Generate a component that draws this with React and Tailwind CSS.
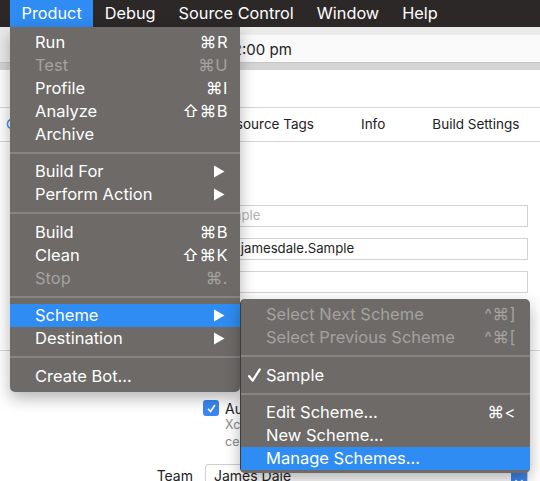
import React from 'react';

const mainItems = [
  { label: 'Run', key: '⌘R' },
  { label: 'Test', key: '⌘U', disabled: true },
  { label: 'Profile', key: '⌘I' },
  { label: 'Analyze', key: '⇧⌘B' },
  { label: 'Archive' },
  { sep: true },
  { label: 'Build For', arrow: true },
  { label: 'Perform Action', arrow: true },
  { sep: true },
  { label: 'Build', key: '⌘B' },
  { label: 'Clean', key: '⇧⌘K' },
  { label: 'Stop', key: '⌘.', disabled: true },
  { sep: true },
  { label: 'Scheme', arrow: true, active: true },
  { label: 'Destination', arrow: true },
  { sep: true },
  { label: 'Create Bot…' },
];

const subItems = [
  { label: 'Select Next Scheme', key: '^⌘]', disabled: true },
  { label: 'Select Previous Scheme', key: '^⌘[', disabled: true },
  { sep: true },
  { label: 'Sample', checked: true },
  { sep: true },
  { label: 'Edit Scheme…', key: '⌘<' },
  { label: 'New Scheme…' },
  { label: 'Manage Schemes…', active: true },
];

function Arrow() {
  return (
    <svg width="12" height="13" viewBox="0 0 12 13" className="ml-auto">
      <path d="M1 0.5 L11.5 6.5 L1 12.5 Z" fill="currentColor" />
    </svg>
  );
}

function Check() {
  return (
    <svg width="13" height="15" viewBox="0 0 13 15">
      <path d="M1.2 8.2 L4.6 12.6 L11.8 1.4" fill="none" stroke="white" strokeWidth="2.3" strokeLinecap="round" strokeLinejoin="round" />
    </svg>
  );
}

function Separator() {
  return (
    <div className="h-[14.5px] flex items-center">
      <div className="h-[2px] w-full bg-[#878482]" />
    </div>
  );
}

function MenuRow({ item, pl, pr, check }) {
  const color = item.disabled ? 'text-[#a5a29f]' : 'text-white';
  const bg = item.active ? 'bg-[#2f8cf2]' : '';
  return (
    <div className={`h-[23px] flex items-center ${pl} ${item.arrow ? 'pr-[15px]' : pr} ${color} ${bg}`}>
      {check && <span className="w-[18px] flex items-center">{item.checked && <Check />}</span>}
      <span>{item.label}</span>
      {item.arrow && <Arrow />}
      {item.key && (
        <span className="ml-auto tracking-[0.5px] font-['Inter','DejaVu_Sans',sans-serif]">{item.key}</span>
      )}
    </div>
  );
}

export default function App() {
  return (
    <div className="relative w-[540px] h-[481px] overflow-hidden bg-white font-['Inter','DejaVu_Sans',sans-serif]">
      {/* menu bar */}
      <div className="h-[27px] bg-[#2c2827] flex items-stretch pl-[10px] text-[16.3px] text-white">
        {['Product', 'Debug', 'Source Control', 'Window', 'Help'].map((m, i) => (
          <div key={m} className={`flex items-center px-[11.5px] ${i === 0 ? 'bg-[#2f8cf2]' : ''}`}>
            {m}
          </div>
        ))}
      </div>

      {/* toolbar */}
      <div className="h-[35px] bg-[#ebebeb] pt-[8px]">
        <div className="ml-[100px] h-[27px] bg-[#fafafa] flex items-center pt-[3px] text-[15px] text-[#222]">
          <span className="w-[142px] text-right">Today at 12</span>
          <span>:00 pm</span>
        </div>
      </div>
      <div className="h-[8px] bg-[#d5d5d5] border-t border-[#c6c6c6]" />

      <div className="h-[37px]" />

      {/* tabs */}
      <div className="h-[35px] border-y border-[#d6d6d6] flex items-center text-[13.5px] text-[#222]">
        <div className="w-[314px] flex justify-between pl-[6px]">
          <span className="text-[#2d7cf5]">General</span>
          <span>Capabilities</span>
          <span>Resource Tags</span>
        </div>
        <span className="ml-[47px]">Info</span>
        <span className="ml-[47px]">Build Settings</span>
      </div>

      <div className="h-[63px]" />

      {/* form fields */}
      <div className="ml-[205px] w-[323px] flex flex-col gap-[11px] text-[13.2px]">
        <div className="h-[22px] border border-[#d3d3d3] flex items-center pl-[8px] text-[#b5b5b5]">Sample</div>
        <div className="h-[22px] border border-[#d3d3d3] flex items-center pl-[4px] text-[#222]">com.jamesdale.Sample</div>
        <div className="h-[22px] border border-[#d3d3d3]" />
      </div>

      <div className="h-[58px] border-b border-[#d8d8d8]" />

      <div className="h-[49px]" />

      {/* signing */}
      <div className="ml-[203px] flex items-center gap-[6px] h-[16px]">
        <div className="w-[16px] h-[16px] rounded-[3px] bg-[#3b86f2] flex items-center justify-center">
          <svg width="11" height="11" viewBox="0 0 11 11">
            <path d="M2 5.8 L4.5 8.5 L9 2" fill="none" stroke="white" strokeWidth="1.6" />
          </svg>
        </div>
        <span className="text-[14px] text-[#222]">Automatically manage signing</span>
      </div>
      <div className="ml-[225px] text-[12.5px] leading-[17px] text-[#8a8a8a]">
        <div>Xcode will create and update profiles, app IDs, and</div>
        <div>certificates.</div>
      </div>

      <div className="h-[14px]" />

      <div className="flex items-center h-[23px] text-[14px] text-[#222]">
        <span className="w-[193px] text-right">Team</span>
        <div className="ml-[12px] w-[323px] h-[23px] border border-[#cfcfcf] rounded-[3px] flex items-center pl-[8px]">
          <span>James Dale</span>
          <div className="ml-auto w-[16px] h-full bg-[#3b86f2] flex items-end justify-center">
            <svg width="10" height="8" viewBox="0 0 10 8">
              <path d="M1.5 2 L5 5.5 L8.5 2" fill="none" stroke="white" strokeWidth="1.5" />
            </svg>
          </div>
        </div>
      </div>

      {/* Product menu */}
      <div className="absolute left-[10px] top-[27px] w-[230px] bg-[#6d6a68] rounded-b-[5px] pt-[3.5px] pb-[4px] shadow-[0_6px_16px_rgba(0,0,0,0.3)] text-[16.5px]">
        {mainItems.map((item, i) =>
          item.sep ? <Separator key={i} /> : <MenuRow key={i} item={item} pl="pl-[25px]" pr="pr-[12px]" />
        )}
      </div>

      {/* Scheme submenu */}
      <div className="absolute left-[240px] top-[299px] w-[290px] bg-[#6d6a68] rounded-[5px] pt-[4px] pb-[3px] border-l border-[#3e3b3a] shadow-[0_6px_16px_rgba(0,0,0,0.3)] text-[16.5px]">
        {subItems.map((item, i) =>
          item.sep ? <Separator key={i} /> : <MenuRow key={i} item={item} pl="pl-[7px]" pr="pr-[14px]" check />
        )}
      </div>
    </div>
  );
}
